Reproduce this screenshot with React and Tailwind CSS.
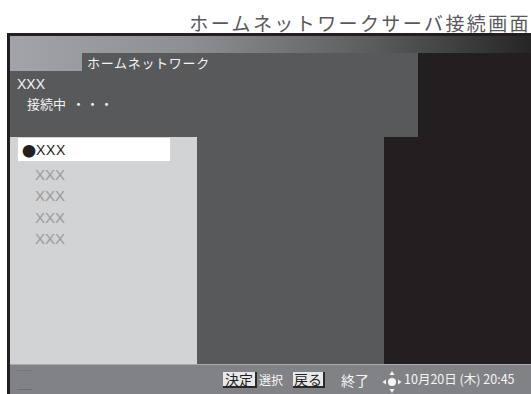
export default function App() {
  const jp = { fontFamily: '"Noto Sans CJK JP", "Noto Sans", sans-serif' };
  const lat = { fontFamily: '"Liberation Sans", "Noto Sans CJK JP", sans-serif' };
  return (
    <div className="w-[531px] h-[394px] bg-white overflow-hidden flex flex-col" style={jp}>
      <div className="pt-[13px] h-[33px] flex justify-end">
        <div className="text-[19px] leading-[19px] tracking-[2.4px] text-[#58595b] whitespace-nowrap">
          ホームネットワークサーバ接続画面
        </div>
      </div>
      <div className="ml-[7px] flex-1 border-l-[3px] border-t-[3px] border-[#231f20] flex flex-col">
        {/* header + tab */}
        <div className="bg-[linear-gradient(to_right,#a3a4a7_0%,#8d8e91_35%,#5a5b5d_70%,#262627_100%)] flex flex-col">
          <div className="h-[17px]" />
          <div className="h-[18px] flex">
            <div className="w-[72px]" />
            <div className="w-[336px] bg-[#58595b] flex items-center pl-[5px] text-[13px] leading-none tracking-[0.7px] text-[#f4f4f4]">
              ホームネットワーク
            </div>
            <div className="flex-1 bg-[#231f20]" />
          </div>
        </div>
        {/* info panel */}
        <div className="h-[66px] flex">
          <div className="w-[408px] bg-[#58595b] pl-[7px] pt-[5px] text-[#f4f4f4]">
            <div className="text-[14px] leading-[17px]" style={lat}>XXX</div>
            <div className="text-[13px] leading-[17px] pl-[10px] mt-[2px]">
              接続中<span className="ml-[6px] tracking-[1px]">・・・</span>
            </div>
          </div>
          <div className="flex-1 bg-[#231f20]" />
        </div>
        {/* lists */}
        <div className="flex-1 flex">
          <div className="w-[187px] bg-[#d1d3d4] pt-[1px] pl-[8px]">
            <div className="w-[152px] h-[23px] bg-white flex items-center pl-[4px] text-[#231f20]">
              <span className="text-[14px] leading-none" style={jp}>●</span>
              <span className="text-[14px] leading-none tracking-[0.6px]" style={lat}>XXX</span>
            </div>
            <div className="pl-[17px] pt-[3px] text-[15px] leading-[21.3px] text-[#9a9b9d]" style={lat}>
              <div>XXX</div>
              <div>XXX</div>
              <div>XXX</div>
              <div>XXX</div>
            </div>
          </div>
          <div className="w-[187px] bg-[#58595b]" />
          <div className="flex-1 bg-[#231f20]" />
        </div>
        {/* bottom bar */}
        <div className="h-[30px] bg-[#808285] border-t border-[#a9abae] flex items-center text-[#f6f6f6]">
          <div className="ml-[7px] w-[15px] h-[20px] flex flex-col justify-between">
            <div className="h-px bg-[#74767a]" />
            <div className="h-px bg-[#6a6c70]" />
          </div>
          <div className="ml-[191px] w-[34px] h-[16px] bg-[#e9e9ea] border-r-2 border-b-2 border-[#2a2a2b] flex items-center justify-center text-[14px] leading-none text-[#231f20]">
            決定
          </div>
          <div className="ml-[2px] w-[24px] text-[12px] leading-none">選択</div>
          <div className="ml-[10px] w-[32px] h-[16px] bg-[#e9e9ea] border-r-2 border-b-2 border-[#2a2a2b] flex items-center justify-center text-[14px] leading-none text-[#231f20]">
            戻る
          </div>
          <div className="ml-[16px] w-[28px] text-[14px] leading-none">終了</div>
          <svg className="ml-[12px]" width="22" height="29" viewBox="0 0 22 29">
            <polygon points="8.5,10 13.5,10 11,6" fill="#f6f6f6" />
            <polygon points="8.5,24 13.5,24 11,28" fill="#f6f6f6" />
            <polygon points="5,14.5 5,19.5 1.5,17" fill="#f6f6f6" />
            <polygon points="17,14.5 17,19.5 20.5,17" fill="#f6f6f6" />
            <circle cx="11" cy="17" r="4" fill="#f6f6f6" />
          </svg>
          <div className="ml-[1px] text-[12.5px] leading-none tracking-[0px] whitespace-nowrap">
            10月20日 (木) 20:45
          </div>
        </div>
      </div>
    </div>
  );
}
